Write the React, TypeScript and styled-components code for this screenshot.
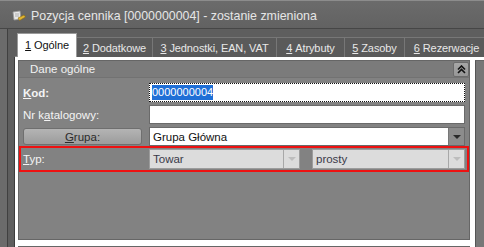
import React from 'react'
import styled, { createGlobalStyle } from 'styled-components'

const GlobalStyle = createGlobalStyle`
  html, body {
    margin: 0;
    padding: 0;
    background: #5c5c5c;
  }
  body {
    font-family: "Liberation Sans", Arial, sans-serif;
    font-size: 11px;
  }
`

const Window = styled.div`
  width: 484px;
  height: 247px;
  overflow: hidden;
  display: flex;
  flex-direction: column;
  background: #5c5c5c;
`

const TitleBar = styled.div`
  box-sizing: border-box;
  height: 29px;
  flex: none;
  display: flex;
  align-items: center;
  gap: 5px;
  padding: 3px 0 0 12px;
  background: linear-gradient(#6b6b6b, #626262);
  border-top: 1px solid #8c8c8c;
  border-bottom: 1px solid #464646;
  color: #e6e6e6;
  font-size: 12.4px;
`

const Body = styled.div`
  flex: 1;
  display: flex;
  min-height: 0;
`

const Sidebar = styled.div`
  width: 7px;
  flex: none;
  background: #6b6b6b;
  border-right: 1px solid #404040;
`

const Main = styled.div`
  flex: 1;
  display: flex;
  flex-direction: column;
  padding-top: 4px;
  background: #5e5e5e;
  min-width: 0;
`

const TabStrip = styled.div`
  display: flex;
  align-items: flex-end;
  height: 24px;
  margin-left: 9px;
  margin-bottom: -1px;
  position: relative;
  z-index: 1;
`

const Tab = styled.div<{ $active?: boolean; $w: number }>`
  box-sizing: border-box;
  flex: none;
  width: ${({ $w }) => $w}px;
  height: ${({ $active }) => ($active ? 24 : 20)}px;
  display: flex;
  align-items: center;
  justify-content: center;
  padding-bottom: ${({ $active }) => ($active ? 2 : 0)}px;
  background: ${({ $active }) => ($active ? '#ffffff' : '#5a5a5a')};
  color: ${({ $active }) => ($active ? '#111' : '#e8e8e8')};
  border: 1px solid ${({ $active }) => ($active ? '#9a9a9a' : '#777')};
  border-bottom: none;
  border-left-width: ${({ $active }) => ($active ? 1 : 0)}px;
  font-size: 11px;
  letter-spacing: -0.1px;
  white-space: nowrap;
  overflow: hidden;
`

const U = styled.span`
  text-decoration: underline;
`

const Page = styled.div`
  flex: 1;
  display: flex;
  gap: 5px;
  margin-left: 6px;
  padding: 3px 0 0 3px;
  background: #ffffff;
  border-left: 1px solid #3c3c3c;
  border-top: 1px solid #8a8a8a;
`

const PanelColumn = styled.div`
  width: 452px;
  flex: none;
  display: flex;
  flex-direction: column;
  gap: 6px;
`

const Panel = styled.div`
  box-sizing: border-box;
  height: 180px;
  flex: none;
  background: #828282;
  border: 1px solid #666;
  display: flex;
  flex-direction: column;
`

const NextPanel = styled.div`
  flex: 1;
  background: #828282;
  border: 1px solid #666;
`

const SidePanel = styled.div`
  flex: 1;
  background: #777;
  border-left: 1px solid #555;
  border-top: 1px solid #666;
`

const PanelHeader = styled.div`
  box-sizing: border-box;
  height: 17px;
  display: flex;
  align-items: center;
  justify-content: space-between;
  padding: 0 0 0 11px;
  background: #7b7b7b;
  border-bottom: 1px solid #727272;
  color: #f2f2f2;
  font-size: 11.5px;
`

const CollapseButton = styled.div`
  box-sizing: border-box;
  width: 16px;
  height: 15px;
  margin-top: 1px;
  display: flex;
  align-items: center;
  justify-content: center;
  background: linear-gradient(#a6a6a6, #979797);
  border: 1px solid #6c6c6c;
  border-radius: 2px;
`

const PanelBody = styled.div`
  display: flex;
  flex-direction: column;
  gap: 3px;
  padding: 5px 4px 0 4px;
`

const Row = styled.div`
  position: relative;
  height: 19px;
  display: flex;
  align-items: center;
`

const Label = styled.div<{ $bold?: boolean }>`
  width: 126px;
  flex: none;
  color: #f4f4f4;
  font-size: 11.5px;
  font-weight: ${({ $bold }) => ($bold ? 700 : 400)};
`

const TextInput = styled.div<{ $focused?: boolean }>`
  box-sizing: border-box;
  flex: 1;
  height: 19px;
  display: flex;
  align-items: center;
  padding-left: 2px;
  background: #fff;
  border: 1px ${({ $focused }) => ($focused ? 'dotted #111' : 'solid #6a6a6a')};
  color: #111;
  font-size: 11px;
`

const Selected = styled.span`
  background: #1f6fd6;
  color: #fff;
  line-height: 15px;
`

const GroupButton = styled.div`
  box-sizing: border-box;
  width: 119px;
  height: 17px;
  flex: none;
  margin-right: 7px;
  display: flex;
  align-items: center;
  justify-content: center;
  background: linear-gradient(#b4b4b4, #9c9c9c);
  border: 1px solid #6f6f6f;
  border-radius: 3px;
  color: #2c2c2c;
  font-size: 11.5px;
`

const Combo = styled.div<{ $disabled?: boolean; $w?: number }>`
  box-sizing: border-box;
  ${({ $w }) => ($w ? `width: ${$w}px; flex: none;` : 'flex: 1;')}
  height: ${({ $disabled }) => ($disabled ? 20 : 19)}px;
  display: flex;
  align-items: center;
  background: ${({ $disabled }) => ($disabled ? '#dcdcdc' : '#fff')};
  border: 1px solid ${({ $disabled }) => ($disabled ? '#9c9c9c' : '#6a6a6a')};
  color: ${({ $disabled }) => ($disabled ? '#3a3a4a' : '#111')};
  font-size: 11.5px;
`

const ComboText = styled.div`
  flex: 1;
  padding-left: 3px;
  white-space: nowrap;
  overflow: hidden;
`

const ComboArrow = styled.div<{ $disabled?: boolean }>`
  box-sizing: border-box;
  width: 16px;
  height: 100%;
  flex: none;
  display: flex;
  align-items: center;
  justify-content: center;
  background: ${({ $disabled }) => ($disabled ? '#dcdcdc' : '#8c8c8c')};
  border-left: 1px solid ${({ $disabled }) => ($disabled ? '#a8a8a8' : '#777')};
`

const Triangle = styled.span<{ $disabled?: boolean }>`
  width: 0;
  height: 0;
  border-left: 4px solid transparent;
  border-right: 4px solid transparent;
  border-top: 4px solid ${({ $disabled }) => ($disabled ? '#bdbdbd' : '#2a2a2a')};
`

const Highlight = styled.span`
  position: absolute;
  left: -4px;
  right: -4px;
  top: -3px;
  bottom: -4px;
  border: 2px solid #ee1111;
  pointer-events: none;
`

const Gap = styled.div`
  width: 12px;
  flex: none;
`

const tabs = [
  { n: '1', label: 'Ogólne', w: 60 },
  { n: '2', label: 'Dodatkowe', w: 76 },
  { n: '3', label: 'Jednostki, EAN, VAT', w: 124 },
  { n: '4', label: 'Atrybuty', w: 68 },
  { n: '5', label: 'Zasoby', w: 60 },
  { n: '6', label: 'Rezerwacje', w: 84 },
]

const TitleIcon = () => (
  <svg width="14" height="12" viewBox="0 0 14 12">
    <path d="M1 2 L8 1 L9 9 L2 10 Z" fill="#e8e8e8" stroke="#9a9a9a" strokeWidth="0.8" />
    <path d="M3 4 H7 M3 6 H7" stroke="#a0a0a0" strokeWidth="0.8" />
    <path d="M6 8 L12 5 L13.5 7 L7.5 10.5 Z" fill="#e2b632" stroke="#8a6a10" strokeWidth="0.6" />
  </svg>
)

const ChevronsUp = () => (
  <svg width="9" height="9" viewBox="0 0 9 9">
    <path d="M1 4.5 L4.5 1 L8 4.5 M1 8 L4.5 4.5 L8 8" fill="none" stroke="#111" strokeWidth="1.6" />
  </svg>
)

export default function App() {
  return (
    <>
      <GlobalStyle />
      <Window>
        <TitleBar>
          <TitleIcon />
          <span>Pozycja cennika [0000000004] - zostanie zmieniona</span>
        </TitleBar>
        <Body>
          <Sidebar />
          <Main>
            <TabStrip>
              {tabs.map((t, i) => (
                <Tab key={t.n} $active={i === 0} $w={t.w}>
                  <U>{t.n}</U>&nbsp;{t.label}
                </Tab>
              ))}
            </TabStrip>
            <Page>
              <PanelColumn>
                <Panel>
                  <PanelHeader>
                    <span>Dane ogólne</span>
                    <CollapseButton>
                      <ChevronsUp />
                    </CollapseButton>
                  </PanelHeader>
                  <PanelBody>
                    <Row>
                      <Label $bold>
                        <U>K</U>od:
                      </Label>
                      <TextInput $focused>
                        <Selected>0000000004</Selected>
                      </TextInput>
                    </Row>
                    <Row>
                      <Label>
                        Nr k<U>a</U>talogowy:
                      </Label>
                      <TextInput />
                    </Row>
                    <Row>
                      <GroupButton>
                        <U>G</U>rupa:
                      </GroupButton>
                      <Combo>
                        <ComboText>Grupa Główna</ComboText>
                        <ComboArrow>
                          <Triangle />
                        </ComboArrow>
                      </Combo>
                    </Row>
                    <Row>
                      <Label>
                        <U>T</U>yp:
                      </Label>
                      <Combo $disabled $w={151}>
                        <ComboText>Towar</ComboText>
                        <ComboArrow $disabled>
                          <Triangle $disabled />
                        </ComboArrow>
                      </Combo>
                      <Gap />
                      <Combo $disabled>
                        <ComboText>prosty</ComboText>
                        <ComboArrow $disabled>
                          <Triangle $disabled />
                        </ComboArrow>
                      </Combo>
                      <Highlight />
                    </Row>
                  </PanelBody>
                </Panel>
                <NextPanel />
              </PanelColumn>
              <SidePanel />
            </Page>
          </Main>
        </Body>
      </Window>
    </>
  )
}
